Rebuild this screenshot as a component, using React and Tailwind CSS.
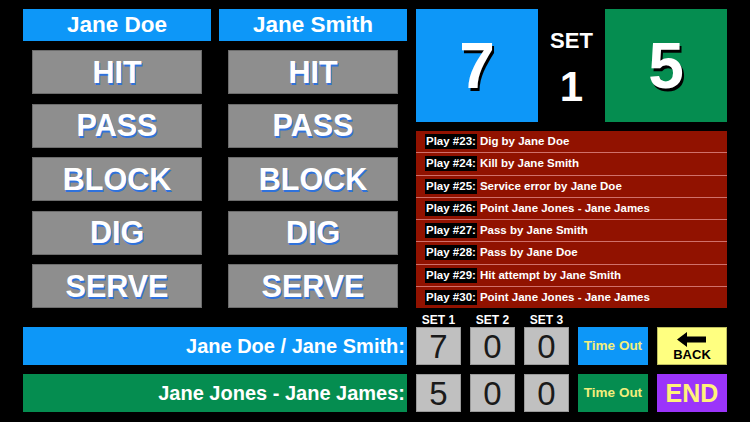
const plays = [
  ["Play #23:", "Dig by Jane Doe"],
  ["Play #24:", "Kill by Jane Smith"],
  ["Play #25:", "Service error by Jane Doe"],
  ["Play #26:", "Point Jane Jones - Jane James"],
  ["Play #27:", "Pass by Jane Smith"],
  ["Play #28:", "Pass by Jane Doe"],
  ["Play #29:", "Hit attempt by Jane Smith"],
  ["Play #30:", "Point Jane Jones - Jane James"],
];

const actions = ["HIT", "PASS", "BLOCK", "DIG", "SERVE"];

function PlayerColumn({ name }) {
  return (
    <div className="w-[188px] flex flex-col">
      <div className="h-[32px] bg-[#0d97f8] flex items-center justify-center text-white font-bold text-[22.5px]">
        {name}
      </div>
      <div className="mt-[9px] mx-[9px] flex flex-col gap-[9.5px]">
        {actions.map((a) => (
          <button
            key={a}
            className="h-[44px] bg-[#8e8e8e] border border-[#6c6c6c] flex items-center justify-center text-white font-bold text-[30.5px] leading-none [text-shadow:1px_1.5px_0_#2f72dc]"
          >
            {a}
          </button>
        ))}
      </div>
    </div>
  );
}

function SetColumn({ label, top, bottom }) {
  return (
    <div className="w-[45px] flex flex-col">
      <div className="h-[14px] text-white font-bold text-[12px] leading-[14px] text-center">{label}</div>
      <div className="h-[38px] bg-[#c0c0c0] border border-[#9a9a9a] flex items-center justify-center text-[#1a1a1a] text-[33px] leading-none">
        {top}
      </div>
      <div className="mt-[9px] h-[38px] bg-[#c0c0c0] border border-[#9a9a9a] flex items-center justify-center text-[#1a1a1a] text-[33px] leading-none">
        {bottom}
      </div>
    </div>
  );
}

export default function App() {
  return (
    <div className="w-[750px] h-[422px] bg-black pt-[9px] pl-[23px] flex flex-col overflow-hidden font-['Liberation_Sans',Arial,sans-serif]">
      <div className="flex h-[299px]">
        <div className="w-[384px] flex gap-[8px]">
          <PlayerColumn name="Jane Doe" />
          <PlayerColumn name="Jane Smith" />
        </div>

        <div className="ml-[9px] w-[311px] flex flex-col">
          <div className="h-[113px] flex">
            <div className="w-[122px] bg-[#0d97f8] flex items-center justify-center text-white font-bold text-[64px] leading-none [text-shadow:2px_3px_0_#000]">
              7
            </div>
            <div className="flex-1 flex flex-col items-center pt-[21px] text-white font-bold">
              <div className="text-[22px] leading-none">SET</div>
              <div className="mt-[14px] text-[42px] leading-none">1</div>
            </div>
            <div className="w-[122px] bg-[#058d50] flex items-center justify-center text-white font-bold text-[64px] leading-none [text-shadow:2px_3px_0_#000]">
              5
            </div>
          </div>

          <div className="mt-[9px] h-[177px] bg-[#911200] flex flex-col">
            {plays.map(([n, t], i) => (
              <div
                key={n}
                className={
                  "flex-1 flex items-center pl-[9px] text-white font-bold text-[11.5px] " +
                  (i > 0 ? "border-t border-[#d0706a]" : "")
                }
              >
                <span className="bg-black px-[1px] leading-[15px]">{n}</span>
                <span className="ml-[3px]">{t}</span>
              </div>
            ))}
          </div>
        </div>
      </div>

      <div className="mt-[5px] flex">
        <div className="w-[384px] pt-[14px] flex flex-col gap-[9px]">
          <div className="h-[38px] bg-[#0d97f8] flex items-center justify-end pr-[2px] text-white font-bold text-[20px]">
            Jane Doe / Jane Smith:
          </div>
          <div className="h-[38px] bg-[#058d50] flex items-center justify-end pr-[2px] text-white font-bold text-[20px]">
            Jane Jones - Jane James:
          </div>
        </div>

        <div className="ml-[9px] flex gap-[9px]">
          <SetColumn label="SET 1" top="7" bottom="5" />
          <SetColumn label="SET 2" top="0" bottom="0" />
          <SetColumn label="SET 3" top="0" bottom="0" />

          <div className="w-[70px] pt-[14px] flex flex-col gap-[9px]">
            <button className="h-[38px] bg-[#0d97f8] text-[#f2ee7c] font-bold text-[13.5px]">Time Out</button>
            <button className="h-[38px] bg-[#058d50] text-[#f2ee7c] font-bold text-[13.5px]">Time Out</button>
          </div>

          <div className="w-[70px] pt-[14px] flex flex-col gap-[9px]">
            <button className="h-[38px] bg-[#ffff80] border border-[#bdbd60] flex flex-col items-center justify-center">
              <svg width="30" height="15" viewBox="0 0 30 15">
                <path d="M0 7.5 L10 0 L10 4.5 L29 4.5 L29 10.5 L10 10.5 L10 15 Z" fill="#000" />
              </svg>
              <span className="text-black font-bold text-[13px] leading-none mt-[1px]">BACK</span>
            </button>
            <button className="h-[38px] bg-[#9b34fa] text-[#fff27a] font-bold text-[25px] leading-none">END</button>
          </div>
        </div>
      </div>
    </div>
  );
}
